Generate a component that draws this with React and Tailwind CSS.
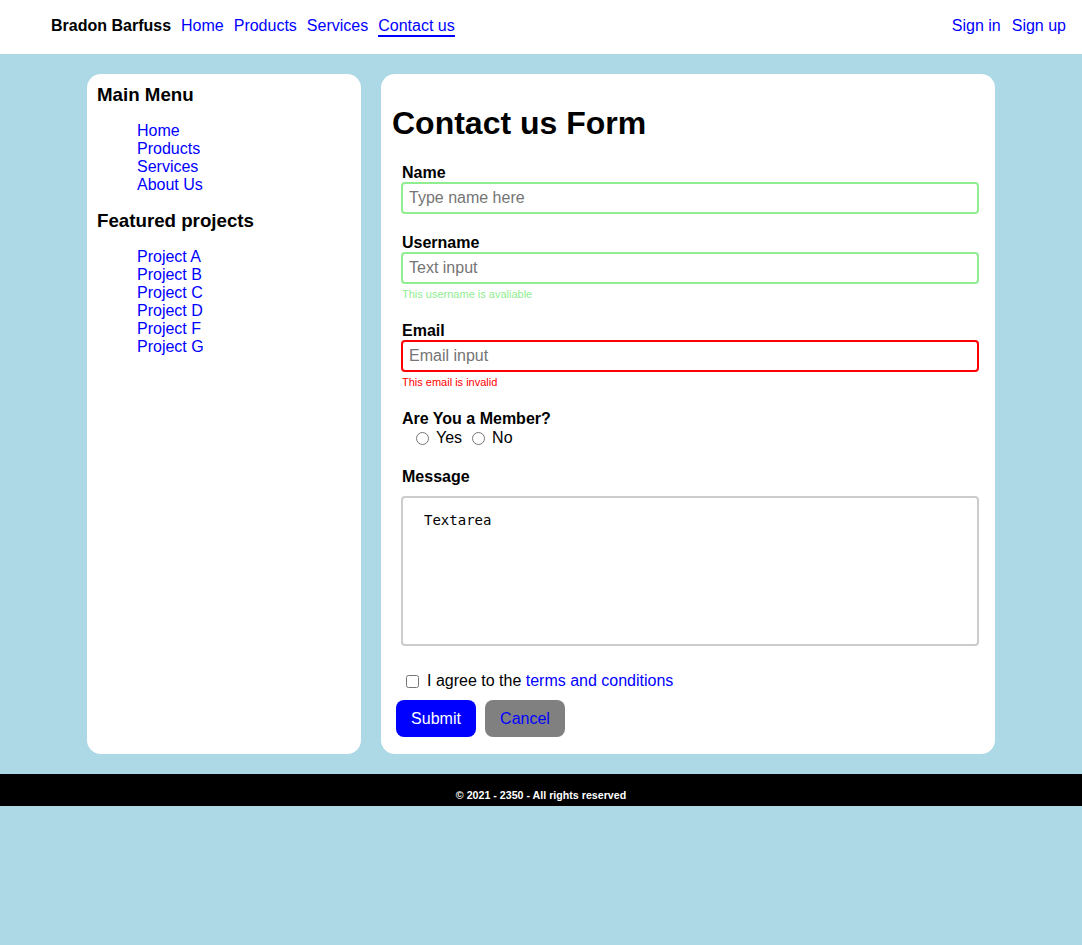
import { useState } from 'react'

const menuLinks = ['Home', 'Products', 'Services', 'About Us']
const projectLinks = ['Project A', 'Project B', 'Project C', 'Project D', 'Project F', 'Project G']

function Header() {
  return (
    <header className="flex h-[54px] items-center justify-between bg-white pb-[2px] pl-[51px] pr-[16px] text-[16px] leading-[18px]">
      <nav className="flex items-center gap-[10px]">
        <span className="font-bold text-black">Bradon Barfuss</span>
        <a href="#" className="text-[#0000ff]">Home</a>
        <a href="#" className="text-[#0000ff]">Products</a>
        <a href="#" className="text-[#0000ff]">Services</a>
        <a href="#" className="mt-[2px] border-b-2 border-[#0000ff] text-[#0000ff]">
          Contact us
        </a>
      </nav>
      <div className="flex items-center gap-[11px]">
        <a href="#" className="text-[#0000ff]">Sign in</a>
        <a href="#" className="text-[#0000ff]">Sign up</a>
      </div>
    </header>
  )
}

function Sidebar() {
  return (
    <aside className="w-[274px] shrink-0 rounded-[14px] bg-white px-[10px] pt-[10px]">
      <h3 className="text-[18.72px] font-bold leading-[22px] text-black">Main Menu</h3>
      <ul className="mt-[16px] pl-[40px] text-[16px] leading-[18px]">
        {menuLinks.map((item) => (
          <li key={item}>
            <a href="#" className="text-[#0000ff]">{item}</a>
          </li>
        ))}
      </ul>
      <h3 className="mt-[16px] text-[18.72px] font-bold leading-[22px] text-black">
        Featured projects
      </h3>
      <ul className="mt-[16px] pl-[40px] text-[16px] leading-[18px]">
        {projectLinks.map((item) => (
          <li key={item}>
            <a href="#" className="text-[#0000ff]">{item}</a>
          </li>
        ))}
      </ul>
    </aside>
  )
}

function ContactForm() {
  const [member, setMember] = useState('')

  return (
    <section className="flex-1 rounded-[14px] bg-white px-[11px] pb-[17px] pt-[10px]">
      <h1 className="mt-[21px] mb-[21px] text-[32px] font-bold leading-[37px] text-black">
        Contact us Form
      </h1>

      <form className="pl-[9px] pr-[5px]" onSubmit={(event) => event.preventDefault()}>
        <label className="block pl-[1px] text-[16px] font-bold leading-[19px] text-black">Name</label>
        <input
          type="text"
          placeholder="Type name here"
          className="block h-[32px] w-full rounded-[4px] border-2 border-[#90ee90] px-[6px] text-[16px] outline-none placeholder:text-[#757575]"
        />

        <label className="mt-[19px] block pl-[1px] text-[16px] font-bold leading-[19px] text-black">
          Username
        </label>
        <input
          type="text"
          placeholder="Text input"
          className="block h-[32px] w-full rounded-[4px] border-2 border-[#90ee90] px-[6px] text-[16px] outline-none placeholder:text-[#757575]"
        />
        <p className="mt-[4px] pl-[1px] text-[11px] leading-[13px] text-[#90ee90]">This username is avaliable</p>

        <label className="mt-[20px] block pl-[1px] text-[16px] font-bold leading-[19px] text-black">
          Email
        </label>
        <input
          type="email"
          placeholder="Email input"
          className="block h-[32px] w-full rounded-[4px] border-2 border-[#ff0000] px-[6px] text-[16px] outline-none placeholder:text-[#757575]"
        />
        <p className="mt-[4px] pl-[1px] text-[11px] leading-[13px] text-[#ff0000]">This email is invalid</p>

        <p className="mt-[20px] pl-[1px] text-[16px] font-bold leading-[19px] text-black">Are You a Member?</p>
        <div className="flex h-[20px] items-center text-[16px] text-black">
          <input
            type="radio"
            name="member"
            checked={member === 'yes'}
            onChange={() => setMember('yes')}
            className="ml-[15px] mr-[7px] h-[13px] w-[13px]"
          />
          <span>Yes</span>
          <input
            type="radio"
            name="member"
            checked={member === 'no'}
            onChange={() => setMember('no')}
            className="ml-[10px] mr-[7px] h-[13px] w-[13px]"
          />
          <span>No</span>
        </div>

        <label className="mt-[19px] block pl-[1px] text-[16px] font-bold leading-[19px] text-black">
          Message
        </label>
        <textarea
          defaultValue="Textarea"
          className="mt-[10px] block h-[150px] w-full resize-none rounded-[4px] border-2 border-[#cccccc] px-[21px] py-[14px] text-[14px] leading-[17px] text-black outline-none"
          style={{ fontFamily: '"DejaVu Sans Mono", monospace' }}
        />

        <div className="mt-[26px] flex h-[18px] items-center text-[16px] text-black">
          <input type="checkbox" className="ml-[5px] mr-[8px] h-[13px] w-[13px]" />
          <span>
            I agree to the <a href="#" className="text-[#0000ff]">terms and conditions</a>
          </span>
        </div>
      </form>

      <div className="mt-[10px] flex gap-[9px] pl-[4px]">
        <button
          type="submit"
          className="h-[37px] w-[80px] rounded-[8px] bg-[#0000ff] text-[16px] text-white"
        >
          Submit
        </button>
        <button
          type="button"
          className="h-[37px] w-[80px] rounded-[8px] bg-[#808080] text-[16px] text-[#0000ff]"
        >
          Cancel
        </button>
      </div>
    </section>
  )
}

function App() {
  return (
    <div
      className="min-h-screen bg-[#add8e6]"
      style={{ fontFamily: '"Liberation Sans", Arial, sans-serif' }}
    >
      <Header />
      <main className="mx-auto flex w-[908px] gap-[20px] pt-[20px]">
        <Sidebar />
        <ContactForm />
      </main>
      <footer className="mt-[20px] bg-black pb-[4px] pt-[15px] text-center text-[10.67px] font-bold leading-[13px] text-white">
        © 2021 - 2350 - All rights reserved
      </footer>
    </div>
  )
}

export default App
